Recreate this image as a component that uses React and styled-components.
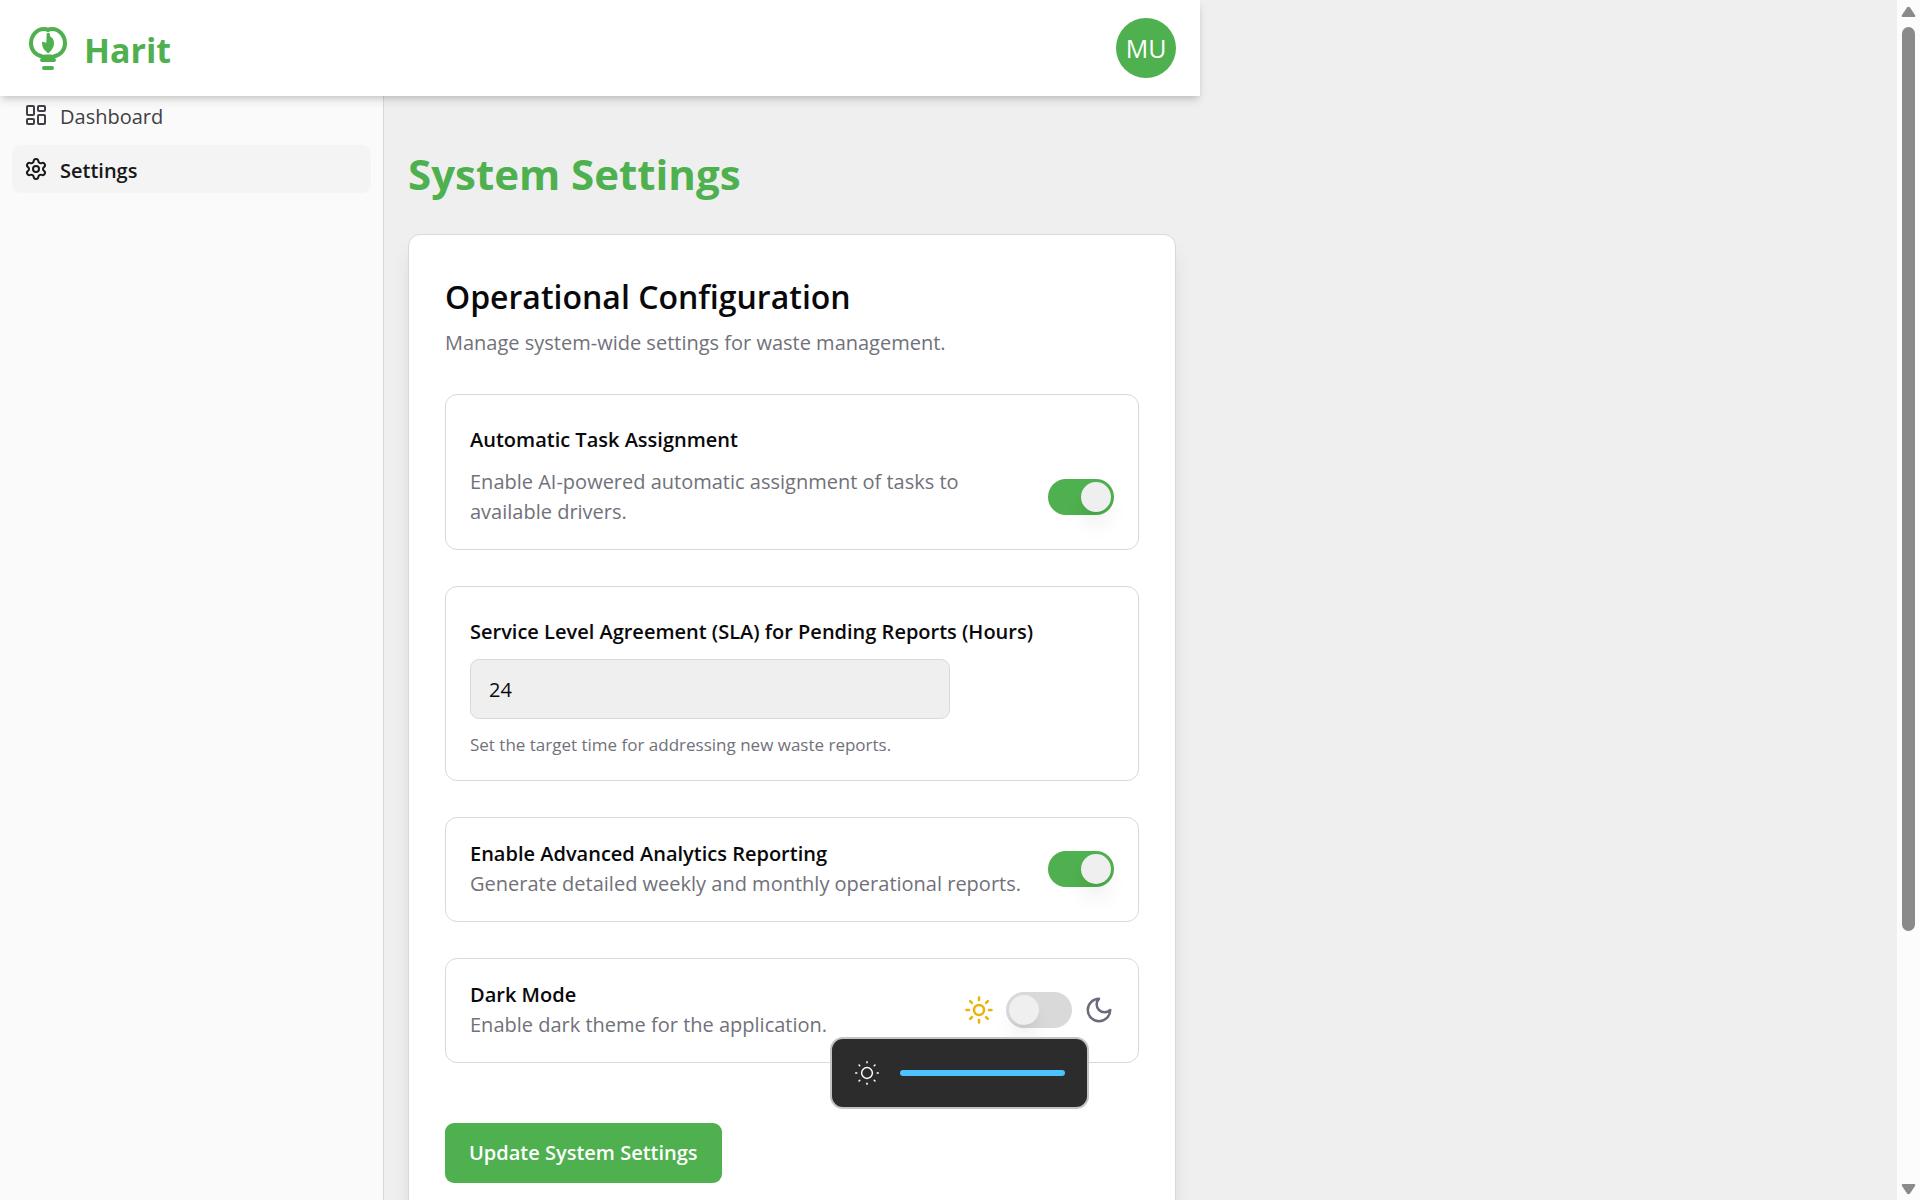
import React, { useState } from "react";
import styled, { createGlobalStyle } from "styled-components";
import { LayoutDashboard, Settings, Sun } from "lucide-react";

const green = "#4eb04e";
const line = "#d9d9d9";
const muted = "#71717a";

const GlobalStyle = createGlobalStyle`
  * { box-sizing: border-box; }
  body {
    margin: 0;
    background: #efefef;
    color: #09090b;
    font-family: "Open Sans", "Noto Sans", sans-serif;
    font-size: 20px;
    line-height: 30px;
  }
  h1, h2, p { margin: 0; }
  button, input { font: inherit; }
`;

const Page = styled.div`
  display: grid;
  grid-template-columns: minmax(0, 1fr) 23px;
  height: 100vh;
  overflow: hidden;
`;

const Shell = styled.div`
  display: grid;
  grid-template-rows: 96px minmax(0, 1fr);
  max-width: 1200px;
  min-height: 0;
`;

const Header = styled.header`
  grid-area: 1 / 1;
  z-index: 2;
  display: flex;
  align-items: center;
  justify-content: space-between;
  padding: 0 24px;
  background: #fff;
  box-shadow: 0 6px 9px -1px rgba(0, 0, 0, 0.1), 0 3px 6px -2px rgba(0, 0, 0, 0.15);
`;

const Brand = styled.a`
  display: flex;
  align-items: center;
  gap: 12px;
  color: ${green};
  font-size: 34px;
  line-height: 48px;
  font-weight: 700;
  text-decoration: none;
`;

const BrandName = styled.span`
  padding-top: 4px;
`;

const Avatar = styled.button`
  width: 60px;
  height: 60px;
  padding: 0;
  border: 0;
  border-radius: 50%;
  background: ${green};
  color: #fff;
  font-size: 25px;
`;

const Body = styled.div`
  grid-area: 1 / 1 / 3 / 2;
  display: grid;
  grid-template-columns: 384px minmax(0, 1fr);
  min-height: 0;
`;

const Sidebar = styled.nav`
  display: flex;
  flex-direction: column;
  gap: 6px;
  padding: 91px 12px 0;
  background: #fafafa;
  border-right: 1px solid ${line};
`;

const NavLink = styled.a`
  display: flex;
  align-items: center;
  gap: 12px;
  height: 48px;
  padding: 0 12px;
  border-radius: 9px;
  background: ${(p) => (p.$active ? "#f4f4f4" : "transparent")};
  color: ${(p) => (p.$active ? "#18181b" : "#3f3f46")};
  font-weight: ${(p) => (p.$active ? 600 : 400)};
  text-decoration: none;
`;

const NavText = styled.span`
  padding-top: 3px;
`;

const Main = styled.main`
  display: flex;
  flex-direction: column;
  gap: 30px;
  padding: 144px 24px 0;
  min-height: 0;
`;

const PageTitle = styled.h1`
  color: ${green};
  font-size: 42px;
  line-height: 60px;
  font-weight: 700;
`;

const Card = styled.section`
  display: flex;
  flex-direction: column;
  flex: none;
  gap: 36px;
  padding: 36px;
  border: 1px solid ${line};
  border-radius: 12px;
  background: #fff;
  box-shadow: 0 15px 22px -4px rgba(0, 0, 0, 0.1), 0 6px 9px -6px rgba(0, 0, 0, 0.1);
`;

const CardHeader = styled.div`
  display: flex;
  flex-direction: column;
  gap: 6px;
`;

const CardTitle = styled.h2`
  font-size: 32px;
  line-height: 51px;
  font-weight: 600;
`;

const Muted = styled.p`
  color: ${muted};
`;

const Hint = styled(Muted)`
  font-size: 17px;
  line-height: 27px;
`;

const Panel = styled.div`
  display: flex;
  align-items: center;
  justify-content: space-between;
  gap: 24px;
  padding: 21px 24px 22px;
  border: 1px solid ${line};
  border-radius: 12px;
`;

const Field = styled.div`
  display: flex;
  flex-direction: column;
  flex: 1;
  gap: ${(p) => (p.$spaced ? 12 : 0)}px;
  padding-top: ${(p) => (p.$spaced ? 9 : 0)}px;
`;

const FieldRow = styled.div`
  display: flex;
  align-items: center;
  justify-content: space-between;
  gap: 24px;
`;

const Label = styled.label`
  font-weight: 600;
`;

const NumberBox = styled.input`
  width: 480px;
  max-width: 100%;
  height: 60px;
  padding: 0 18px;
  border: 1px solid ${line};
  border-radius: 9px;
  background: #efefef;
  color: #09090b;
  appearance: textfield;
  &::-webkit-inner-spin-button { appearance: none; }
`;

const Switch = styled.input`
  appearance: none;
  flex: none;
  display: flex;
  align-items: center;
  width: 66px;
  height: 36px;
  margin: 0;
  padding: 0 3px;
  border-radius: 18px;
  background: ${line};
  &::before {
    content: "";
    width: 30px;
    height: 30px;
    border-radius: 50%;
    background: #efefef;
    box-shadow: 0 15px 22px -4px rgba(0, 0, 0, 0.1), 0 6px 9px -6px rgba(0, 0, 0, 0.1);
  }
  &:checked {
    justify-content: flex-end;
    background: ${green};
  }
`;

const ThemeControl = styled.div`
  display: flex;
  align-items: center;
  gap: 12px;
`;

const SubmitRow = styled.div`
  padding-top: 24px;
`;

const Submit = styled.button`
  height: 60px;
  padding: 0 24px;
  border: 0;
  border-radius: 9px;
  background: ${green};
  color: #fff;
  font-weight: 600;
`;

const Brightness = styled.label`
  position: fixed;
  left: 832px;
  top: 1039px;
  z-index: 5;
  display: flex;
  align-items: center;
  gap: 19px;
  width: 255px;
  height: 68px;
  padding: 0 22px 0 21px;
  border-radius: 11px;
  background: #2c2c2c;
  box-shadow: 0 0 0 2px #c4c4c4;
`;

const Level = styled.input`
  appearance: none;
  flex: 1;
  min-width: 0;
  height: 6px;
  margin: 0;
  border-radius: 3px;
  background: #4cc2ff;
  &::-webkit-slider-thumb { appearance: none; width: 0; height: 0; }
`;

const ScrollTrack = styled.div`
  display: flex;
  flex-direction: column;
  align-items: center;
  justify-content: space-between;
  padding: 6px 0 5px;
  background: #fcfcfc;
`;

const ScrollThumb = styled.div`
  flex: none;
  width: 13px;
  height: 76%;
  margin: 9px 0 auto;
  border-radius: 7px;
  background: #8a8a8a;
`;

const Arrow = ({ down }) => (
  <svg width="15" height="12" viewBox="0 0 15 12" fill="#8a8a8a" aria-hidden="true">
    <path d={down ? "M2 1h11q2 0 1 2L9 10.500q-1.500 1.500-3 0L1 3Q0 1 2 1z" : "M2 11h11q2 0 1-2L9 1.500q-1.500-1.500-3 0L1 9q-1 2 1 2z"} />
  </svg>
);

const Logo = () => (
  <svg width="48" height="48" viewBox="0 0 48 48" fill="none" stroke={green} strokeWidth="4" strokeLinecap="round" strokeLinejoin="round" aria-hidden="true">
    <path d="M18.500 32.500C11 31 7 25.500 7 19.500C7 11 13 5 20 5Q22.500 5 24 6Q25.500 5 28 5C35 5 41 11 41 19.500C41 25.500 37 31 29.500 32.500" />
    <path d="M18 36h12M21 32.500h6" />
    <path d="M20 44h8" />
    <path d="M22.700 9.500q1.500-1.500 3 0L26.300 12.500C29 14 30 16.500 30 19.500C30 23.500 27 27 24.200 29.500L20 25.500C18.500 23.500 18 21 18 17.800L22.300 18.800z" fill={green} stroke="none" />
  </svg>
);

const MoonIcon = () => (
  <svg width="30" height="30" viewBox="0 0 24 24" fill="none" stroke="#6b6b7b" strokeWidth="2" strokeLinecap="round" strokeLinejoin="round" aria-hidden="true">
    <path d="M12 3a6 6 0 0 0 9 9 9 9 0 1 1-9-9Z" />
  </svg>
);

const rays = [0, 45, 90, 135, 180, 225, 270, 315];

const BrightnessIcon = () => (
  <svg width="28" height="28" viewBox="-14 -14 28 28" fill="none" stroke="#fff" strokeWidth="1.5" strokeLinecap="round" aria-hidden="true">
    <circle r="5.4" />
    {rays.map((a) => (
      <path key={a} d="M0 -10.200V-11.300" transform={`rotate(${a})`} />
    ))}
  </svg>
);

export default function App() {
  const [assign, setAssign] = useState(true);
  const [analytics, setAnalytics] = useState(true);
  const [dark, setDark] = useState(false);
  const [hours, setHours] = useState("24");
  const [level, setLevel] = useState(100);

  return (
    <>
      <GlobalStyle />
      <Page>
        <Shell>
          <Header>
            <Brand href="#home"><Logo /><BrandName>Harit</BrandName></Brand>
            <Avatar type="button">MU</Avatar>
          </Header>
          <Body>
            <Sidebar>
              <NavLink href="#dashboard"><LayoutDashboard size={24} /><NavText>Dashboard</NavText></NavLink>
              <NavLink href="#settings" $active><Settings size={24} /><NavText>Settings</NavText></NavLink>
            </Sidebar>
            <Main>
              <PageTitle>System Settings</PageTitle>
              <Card>
                <CardHeader>
                  <CardTitle>Operational Configuration</CardTitle>
                  <Muted>Manage system-wide settings for waste management.</Muted>
                </CardHeader>
                <Panel>
                  <Field $spaced>
                    <Label htmlFor="assign">Automatic Task Assignment</Label>
                    <FieldRow>
                      <Muted>Enable AI-powered automatic assignment of tasks to available drivers.</Muted>
                      <Switch id="assign" type="checkbox" checked={assign} onChange={(e) => setAssign(e.target.checked)} />
                    </FieldRow>
                  </Field>
                </Panel>
                <Panel>
                  <Field $spaced>
                    <Label htmlFor="sla">Service Level Agreement (SLA) for Pending Reports (Hours)</Label>
                    <NumberBox id="sla" type="number" value={hours} onChange={(e) => setHours(e.target.value)} />
                    <Hint>Set the target time for addressing new waste reports.</Hint>
                  </Field>
                </Panel>
                <Panel>
                  <Field>
                    <Label htmlFor="analytics">Enable Advanced Analytics Reporting</Label>
                    <Muted>Generate detailed weekly and monthly operational reports.</Muted>
                  </Field>
                  <Switch id="analytics" type="checkbox" checked={analytics} onChange={(e) => setAnalytics(e.target.checked)} />
                </Panel>
                <Panel>
                  <Field>
                    <Label htmlFor="dark">Dark Mode</Label>
                    <Muted>Enable dark theme for the application.</Muted>
                  </Field>
                  <ThemeControl>
                    <Sun size={30} color="#eab308" aria-hidden="true" />
                    <Switch id="dark" type="checkbox" checked={dark} onChange={(e) => setDark(e.target.checked)} />
                    <MoonIcon />
                  </ThemeControl>
                </Panel>
                <SubmitRow>
                  <Submit type="button">Update System Settings</Submit>
                </SubmitRow>
              </Card>
            </Main>
          </Body>
        </Shell>
        <ScrollTrack>
          <Arrow />
          <ScrollThumb />
          <Arrow down />
        </ScrollTrack>
      </Page>
      <Brightness>
        <BrightnessIcon />
        <Level type="range" aria-label="Brightness" value={level} onChange={(e) => setLevel(e.target.value)} />
      </Brightness>
    </>
  );
}
